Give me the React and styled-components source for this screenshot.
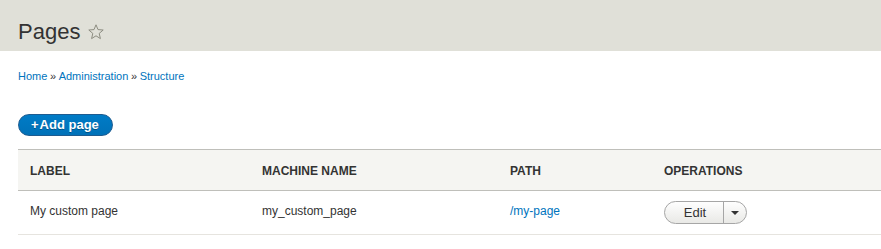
import React from 'react';
import styled, { createGlobalStyle } from 'styled-components';

const GlobalStyle = createGlobalStyle`
  html, body {
    margin: 0;
    padding: 0;
    background: #fff;
    color: #333;
    font-family: "Liberation Sans", Arial, sans-serif;
    overflow: hidden;
  }
`;

const Header = styled.header`
  background: #e0e0d8;
  height: 51px;
  box-sizing: border-box;
  padding: 19px 0 0 18px;
`;

const Title = styled.h1`
  margin: 0;
  font-size: 22px;
  line-height: 26px;
  font-weight: normal;
  color: #333;
  display: flex;
  align-items: center;
  gap: 8px;
`;

const StarIcon = styled.svg`
  width: 16px;
  height: 16px;
  margin-top: -1px;
`;

const Content = styled.main`
  padding: 17px 0 0 18px;
`;

const Breadcrumb = styled.nav`
  font-size: 11px;
  line-height: 16px;
  color: #333;
`;

const Link = styled.a`
  color: #0074bd;
  text-decoration: none;
`;

const Sep = styled.span`
  margin: 0 2.6px;
`;

const ActionBar = styled.div`
  margin-top: 30px;
  height: 22px;
  display: flex;
`;

const PrimaryButton = styled.a`
  display: inline-flex;
  align-items: center;
  box-sizing: border-box;
  height: 22px;
  width: 95px;
  padding: 0 0 1px 12px;
  border: 1px solid #1e5c90;
  border-radius: 20em;
  background: linear-gradient(to bottom, #007bc6, #0071b8);
  color: #fff;
  font-weight: bold;
  font-size: 13px;
  text-decoration: none;
  text-shadow: 0 1px 0 rgba(0, 0, 0, 0.3);
`;

const Plus = styled.span`
  margin-right: 1px;
`;

const Table = styled.table`
  margin-top: 13px;
  width: calc(100% + 40px);
  border-collapse: collapse;
  table-layout: fixed;
`;

const HeadRow = styled.tr`
  background: #f5f5f2;
  border-top: 1px solid #bfbfba;
  border-bottom: 1px solid #bfbfba;
`;

const Th = styled.th`
  height: 39px;
  padding: 1px 12px 0;
  text-align: left;
  font-size: 12px;
  font-weight: bold;
  text-transform: uppercase;
  color: #333;
  vertical-align: middle;
`;

const BodyRow = styled.tr`
  border-bottom: 1px solid #e6e4df;
`;

const Td = styled.td`
  height: 40px;
  padding: 0 12px 3px;
  font-size: 12px;
  color: #333;
  vertical-align: middle;
`;

const Dropbutton = styled.div`
  display: inline-flex;
  box-sizing: border-box;
  height: 23px;
  width: 83px;
  border: 1px solid #a6a6a6;
  border-radius: 12px;
  background: linear-gradient(to bottom, #fefefe, #e9e9e6);
  overflow: hidden;
  margin-top: 2px;
`;

const DropMain = styled.span`
  flex: 0 0 58px;
  display: flex;
  align-items: center;
  justify-content: center;
  font-size: 13px;
  color: #333;
  padding-left: 2px;
  box-sizing: border-box;
`;

const DropToggle = styled.span`
  flex: 1;
  border-left: 1px solid #a6a6a6;
  display: flex;
  align-items: center;
  justify-content: center;
`;

const Arrow = styled.span`
  width: 0;
  height: 0;
  border-left: 4px solid transparent;
  border-right: 4px solid transparent;
  border-top: 4px solid #333;
  margin-top: 1px;
  margin-right: 1px;
`;

const columns = [
  { key: 'label', title: 'Label', width: 232 },
  { key: 'machine', title: 'Machine name', width: 248 },
  { key: 'path', title: 'Path', width: 154 },
  { key: 'ops', title: 'Operations' },
];

const rows = [
  { label: 'My custom page', machine: 'my_custom_page', path: '/my-page' },
];

export default function App() {
  return (
    <>
      <GlobalStyle />
      <Header>
        <Title>
          Pages
          <StarIcon viewBox="0 0 16 16">
            <path
              d="M8 0.8 L10 5.6 L15.2 6 L11.2 9.4 L12.4 14.6 L8 11.8 L3.6 14.6 L4.8 9.4 L0.8 6 L6 5.6 Z"
              fill="none"
              stroke="#8c8c80"
              strokeWidth="1"
              strokeLinejoin="round"
            />
          </StarIcon>
        </Title>
      </Header>
      <Content>
        <Breadcrumb>
          <Link href="#">Home</Link>
          <Sep>»</Sep>
          <Link href="#">Administration</Link>
          <Sep>»</Sep>
          <Link href="#">Structure</Link>
        </Breadcrumb>
        <ActionBar>
          <PrimaryButton href="#">
            <Plus>+</Plus>Add page
          </PrimaryButton>
        </ActionBar>
        <Table>
          <colgroup>
            {columns.map(c => (
              <col key={c.key} style={c.width ? { width: c.width } : undefined} />
            ))}
          </colgroup>
          <thead>
            <HeadRow>
              {columns.map(c => (
                <Th key={c.key}>{c.title}</Th>
              ))}
            </HeadRow>
          </thead>
          <tbody>
            {rows.map(r => (
              <BodyRow key={r.machine}>
                <Td>{r.label}</Td>
                <Td>{r.machine}</Td>
                <Td>
                  <Link href="#">{r.path}</Link>
                </Td>
                <Td>
                  <Dropbutton>
                    <DropMain>Edit</DropMain>
                    <DropToggle>
                      <Arrow />
                    </DropToggle>
                  </Dropbutton>
                </Td>
              </BodyRow>
            ))}
          </tbody>
        </Table>
      </Content>
    </>
  );
}
